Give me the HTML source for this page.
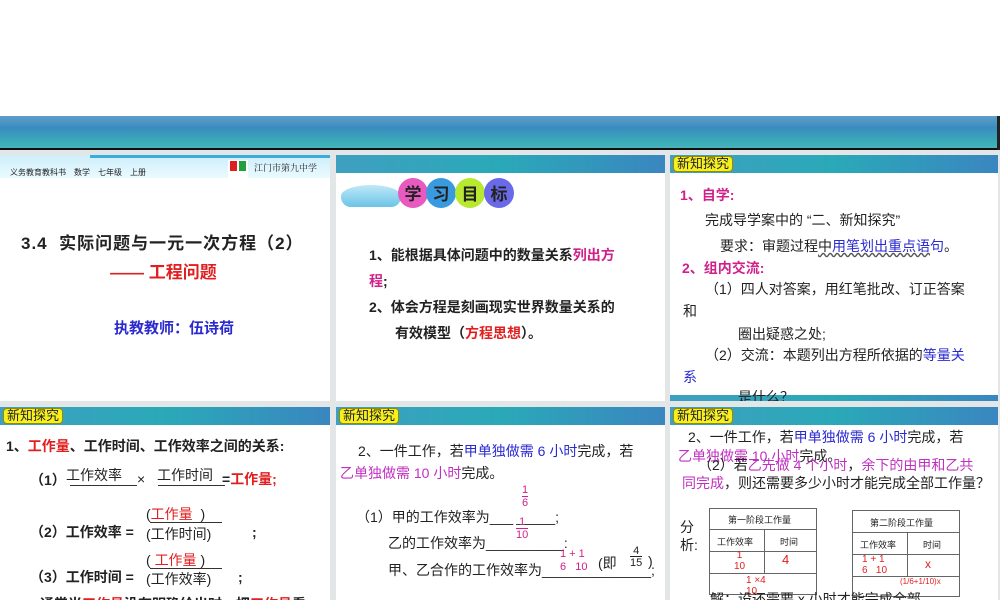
<!DOCTYPE html>
<html><head><meta charset="utf-8"><style>
*{margin:0;padding:0;box-sizing:border-box}
body{width:1000px;height:600px;position:relative;overflow:hidden;background:#fff;font-family:"Liberation Sans","Noto Sans CJK SC",sans-serif}
.a{position:absolute;white-space:nowrap}
.band{position:absolute;left:0;top:116px;width:1000px;height:33px;background:linear-gradient(180deg,#5f9fc8 0%,#3a8cc0 35%,#3aaab8 75%,#48b4bc 100%)}
.grid{position:absolute;left:0;top:150px;width:1000px;height:450px;background:#e2e6e6}
.p{position:absolute;background:#fff;overflow:hidden}
.hd{position:absolute;left:0;top:0;width:100%;height:18px;background:linear-gradient(90deg,#3f9fc0,#2aa9b8 50%,#3a86c0)}
.tag{position:absolute;left:3px;top:1px;height:16px;padding:0 3px;background:#f6f020;border:1px solid #9a8a00;border-radius:4px;font-size:13px;line-height:14px;color:#222}
.b{font-weight:bold}
.r{color:#e02020}.m{color:#d0208a}.bl{color:#2a2ad0}.pu{color:#c030c0}
.f{font-size:14px}
</style></head><body>
<div class="band"></div>
<div style="position:absolute;left:0;top:148px;width:1000px;height:2px;background:#111"></div>
<div style="position:absolute;left:997px;top:116px;width:3px;height:34px;background:#222"></div>
<div class="grid"></div>

<!-- panel 1 -->
<div class="p" style="left:0;top:155px;width:330px;height:246px">
 <div style="position:absolute;left:0;top:0;width:330px;height:23px;background:linear-gradient(180deg,#cdeefa,#eafaff)"></div>
 <div style="position:absolute;left:90px;top:0;width:240px;height:3px;background:#3aaedb"></div>
 <div class="a" style="left:10px;top:12px;font-size:8px;color:#222">义务教育教科书　数学　七年级　上册</div>
 <div style="position:absolute;left:228px;top:5px;width:20px;height:18px;background:#fff"><div style="position:absolute;left:2px;top:1px;width:7px;height:10px;background:#e02020"></div><div style="position:absolute;left:11px;top:1px;width:7px;height:10px;background:#20a040"></div></div>
 <div class="a" style="left:254px;top:6px;font-size:9px;color:#222;font-family:'Noto Serif CJK SC',serif">江门市第九中学</div>
 <div class="a b" style="left:21px;top:74px;font-size:17px;letter-spacing:1px;color:#222">3.4&nbsp; 实际问题与一元一次方程（2）</div>
 <div class="a b r" style="left:110px;top:103px;font-size:17px">—— 工程问题</div>
 <div class="a b bl" style="left:114px;top:162px;font-size:15px">执教教师：伍诗荷</div>
</div>

<!-- panel 2 -->
<div class="p" style="left:336px;top:155px;width:329px;height:246px">
 <div class="hd"></div>
 <div style="position:absolute;left:5px;top:30px;width:60px;height:22px;border-radius:50% 50% 10px 10px;background:linear-gradient(#bfe8f8,#6cc4e8)"></div>
 <div style="position:absolute;left:62px;top:23px;width:30px;height:30px;border-radius:50%;background:#e85ac0;text-align:center;font:bold 17px/30px 'Noto Sans CJK SC';color:#222">学</div>
 <div style="position:absolute;left:90px;top:23px;width:30px;height:30px;border-radius:50%;background:#3a9ae0;text-align:center;font:bold 17px/30px 'Noto Sans CJK SC';color:#222">习</div>
 <div style="position:absolute;left:119px;top:23px;width:30px;height:30px;border-radius:50%;background:#b8e830;text-align:center;font:bold 17px/30px 'Noto Sans CJK SC';color:#222">目</div>
 <div style="position:absolute;left:148px;top:23px;width:30px;height:30px;border-radius:50%;background:#6a6ae8;text-align:center;font:bold 17px/30px 'Noto Sans CJK SC';color:#222">标</div>
 <div class="a b f" style="left:33px;top:90px;color:#222">1、能根据具体问题中的数量关系<span class="m">列出方</span></div>
 <div class="a b f m" style="left:33px;top:116px">程<span style="color:#222">;</span></div>
 <div class="a b f" style="left:33px;top:142px;color:#222">2、体会方程是刻画现实世界数量关系的</div>
 <div class="a b f" style="left:59px;top:168px;color:#222">有效模型（<span class="r">方程思想</span>）。</div>
</div>

<!-- panel 3 -->
<div class="p" style="left:670px;top:155px;width:328px;height:246px">
 <div class="hd"></div>
 <div class="tag">新知探究</div>
 <div class="a b f m" style="left:10px;top:30px">1、自学:</div>
 <div class="a f" style="left:35px;top:55px;color:#222">完成导学案中的 “二、新知探究”</div>
 <div class="a f" style="left:50px;top:81px;color:#222">要求：审题过程<span style="text-decoration:underline wavy #555">中<span class="bl">用笔划出重点语</span></span><span class="bl">句</span>。</div>
 <div class="a b f m" style="left:12px;top:103px">2、组内交流:</div>
 <div class="a f" style="left:35px;top:124px;color:#222">（1）四人对答案，用红笔批改、订正答案</div>
 <div class="a f" style="left:13px;top:146px;color:#222">和</div>
 <div class="a f" style="left:68px;top:169px;color:#222">圈出疑惑之处;</div>
 <div class="a f" style="left:35px;top:190px;color:#222">（2）交流：本题列出方程所依据的<span class="bl">等量关</span></div>
 <div class="a f bl" style="left:13px;top:212px">系</div>
 <div class="hd" style="top:240px;height:8px"></div>
 <div class="a f" style="left:68px;top:232px;color:#222">是什么？</div>
</div>

<!-- panel 4 -->
<div class="p" style="left:0;top:407px;width:330px;height:193px">
 <div class="hd"></div>
 <div class="tag">新知探究</div>
 <div class="a b f" style="left:6px;top:29px;color:#222">1、<span class="r">工作量</span>、工作时间、工作效率之间的关系:</div>
 <div class="a b f" style="left:30px;top:63px;color:#222">（1）</div>
 <div class="a f" style="left:66px;top:58px;color:#222">工作效率</div>
 <div style="position:absolute;left:70px;top:78px;width:67px;height:1px;background:#333"></div>
 <div class="a f" style="left:137px;top:64px;color:#222">×</div>
 <div class="a f" style="left:157px;top:58px;color:#222">工作时间</div>
 <div style="position:absolute;left:158px;top:78px;width:67px;height:1px;background:#333"></div>
 <div class="a b f" style="left:222px;top:62px;color:#222">=<span class="r">工作量;</span></div>
 <div class="a b f" style="left:30px;top:115px;color:#222">（2）工作效率 =</div>
 <div class="a f" style="left:146px;top:97px"><span style="color:#222">(</span><span class="r">工作量</span>&nbsp;&nbsp;<span style="color:#222">)</span></div>
 <div style="position:absolute;left:150px;top:115px;width:72px;height:1px;background:#333"></div>
 <div class="a f" style="left:146px;top:117px;color:#222">(工作时间)</div>
 <div class="a b f" style="left:252px;top:117px;color:#222">;</div>
 <div class="a b f" style="left:30px;top:160px;color:#222">（3）工作时间 =</div>
 <div class="a f" style="left:146px;top:143px"><span style="color:#222">(</span>&nbsp;<span class="r">工作量</span>&nbsp;<span style="color:#222">)</span></div>
 <div style="position:absolute;left:150px;top:161px;width:72px;height:1px;background:#333"></div>
 <div class="a f" style="left:146px;top:162px;color:#222">(工作效率)</div>
 <div class="a b f" style="left:238px;top:162px;color:#222">;</div>
 <div class="a b f" style="left:40px;top:187px;color:#222">通常当<span class="r">工作量</span>没有明确给出时，把<span class="r">工作量</span>看</div>
</div>

<!-- panel 5 -->
<div class="p" style="left:336px;top:407px;width:329px;height:193px">
 <div class="hd"></div>
 <div class="tag">新知探究</div>
 <div class="a f" style="left:22px;top:34px;color:#222">2、一件工作，若<span class="bl">甲单独做需 6 小时</span>完成，若</div>
 <div class="a f pu" style="left:4px;top:56px">乙单独做需 10 小时<span style="color:#222">完成。</span></div>
 <div class="a f" style="left:20px;top:100px;color:#222">（1）甲的工作效率为___<span class="m" style="position:relative;top:-12px;font-size:11px">&nbsp;</span>_____;</div>
 <div class="a m" style="left:186px;top:77px;font-size:11px;text-align:center;line-height:12px">1<br><span style="display:inline-block;border-top:1px solid #d0208a">6</span></div>
 <div class="a f" style="left:52px;top:126px;color:#222">乙的工作效率为__________:</div>
 <div class="a m" style="left:180px;top:109px;font-size:11px;text-align:center;line-height:12px">1<br><span style="display:inline-block;border-top:1px solid #d0208a">10</span></div>
 <div class="a f" style="left:52px;top:153px;color:#222">甲、乙合作的工作效率为______________;</div>
 <div class="a m" style="left:224px;top:141px;font-size:11px;line-height:12px">1 + 1</div>
 <div class="a m" style="left:224px;top:154px;font-size:11px;line-height:12px">6&nbsp;&nbsp; 10</div>
 <div class="a f" style="left:262px;top:146px;color:#222">(即</div>
 <div class="a" style="left:294px;top:138px;font-size:11px;line-height:12px;color:#222;text-align:center">4<br><span style="border-top:1px solid #222">15</span></div>
 <div class="a f" style="left:312px;top:146px;color:#222">)</div>
</div>

<!-- panel 6 -->
<div class="p" style="left:670px;top:407px;width:328px;height:193px">
 <div class="hd"></div>
 <div class="tag">新知探究</div>
 <div class="a f" style="left:18px;top:20px;color:#222">2、一件工作，若<span class="bl">甲单独做需 6 小时</span>完成，若</div>
 <div class="a f pu" style="left:8px;top:39px">乙单独做需 10 小时<span style="color:#222">完成。</span></div>
 <div class="a f" style="left:28px;top:48px;color:#222">（2）若<span class="pu">乙先做 4 个小时</span>，<span class="pu">余下的由甲和乙共</span></div>
 <div class="a f" style="left:12px;top:66px;color:#222"><span class="pu">同完成</span>，则还需要多少小时才能完成全部工作量？</div>
 <div class="a f" style="left:10px;top:111px;color:#222;line-height:18px">分<br>析:</div>
 <div style="position:absolute;left:39px;top:101px;width:108px;height:87px;border:1px solid #666"></div>
 <div style="position:absolute;left:39px;top:122px;width:108px;height:1px;background:#666"></div>
 <div style="position:absolute;left:39px;top:144px;width:108px;height:1px;background:#666"></div>
 <div style="position:absolute;left:39px;top:166px;width:108px;height:1px;background:#666"></div>
 <div style="position:absolute;left:94px;top:122px;width:1px;height:44px;background:#666"></div>
 <div class="a" style="left:58px;top:106px;font-size:9px;color:#222">第一阶段工作量</div>
 <div class="a" style="left:47px;top:128px;font-size:9px;color:#222">工作效率</div>
 <div class="a" style="left:110px;top:128px;font-size:9px;color:#222">时间</div>
 <div class="a r" style="left:64px;top:143px;font-size:10px;line-height:11px;text-align:center">1<br>10</div>
 <div class="a r" style="left:112px;top:145px;font-size:13px">4</div>
 <div class="a r" style="left:76px;top:168px;font-size:10px;line-height:11px">1 ×4<br>10</div>
 <div style="position:absolute;left:182px;top:103px;width:108px;height:87px;border:1px solid #666"></div>
 <div style="position:absolute;left:182px;top:125px;width:108px;height:1px;background:#666"></div>
 <div style="position:absolute;left:182px;top:147px;width:108px;height:1px;background:#666"></div>
 <div style="position:absolute;left:182px;top:169px;width:108px;height:1px;background:#666"></div>
 <div style="position:absolute;left:237px;top:125px;width:1px;height:44px;background:#666"></div>
 <div class="a" style="left:200px;top:109px;font-size:9px;color:#222">第二阶段工作量</div>
 <div class="a" style="left:190px;top:131px;font-size:9px;color:#222">工作效率</div>
 <div class="a" style="left:253px;top:131px;font-size:9px;color:#222">时间</div>
 <div class="a r" style="left:192px;top:147px;font-size:10px;line-height:11px">1 + 1<br>6&nbsp;&nbsp; 10</div>
 <div class="a r" style="left:255px;top:150px;font-size:12px">x</div>
 <div class="a r" style="left:230px;top:170px;font-size:8px">(1/6+1/10)x</div>
 <div class="a f" style="left:40px;top:182px;color:#222">解：设还需要 x 小时才能完成全部</div>
</div>
</body></html>
